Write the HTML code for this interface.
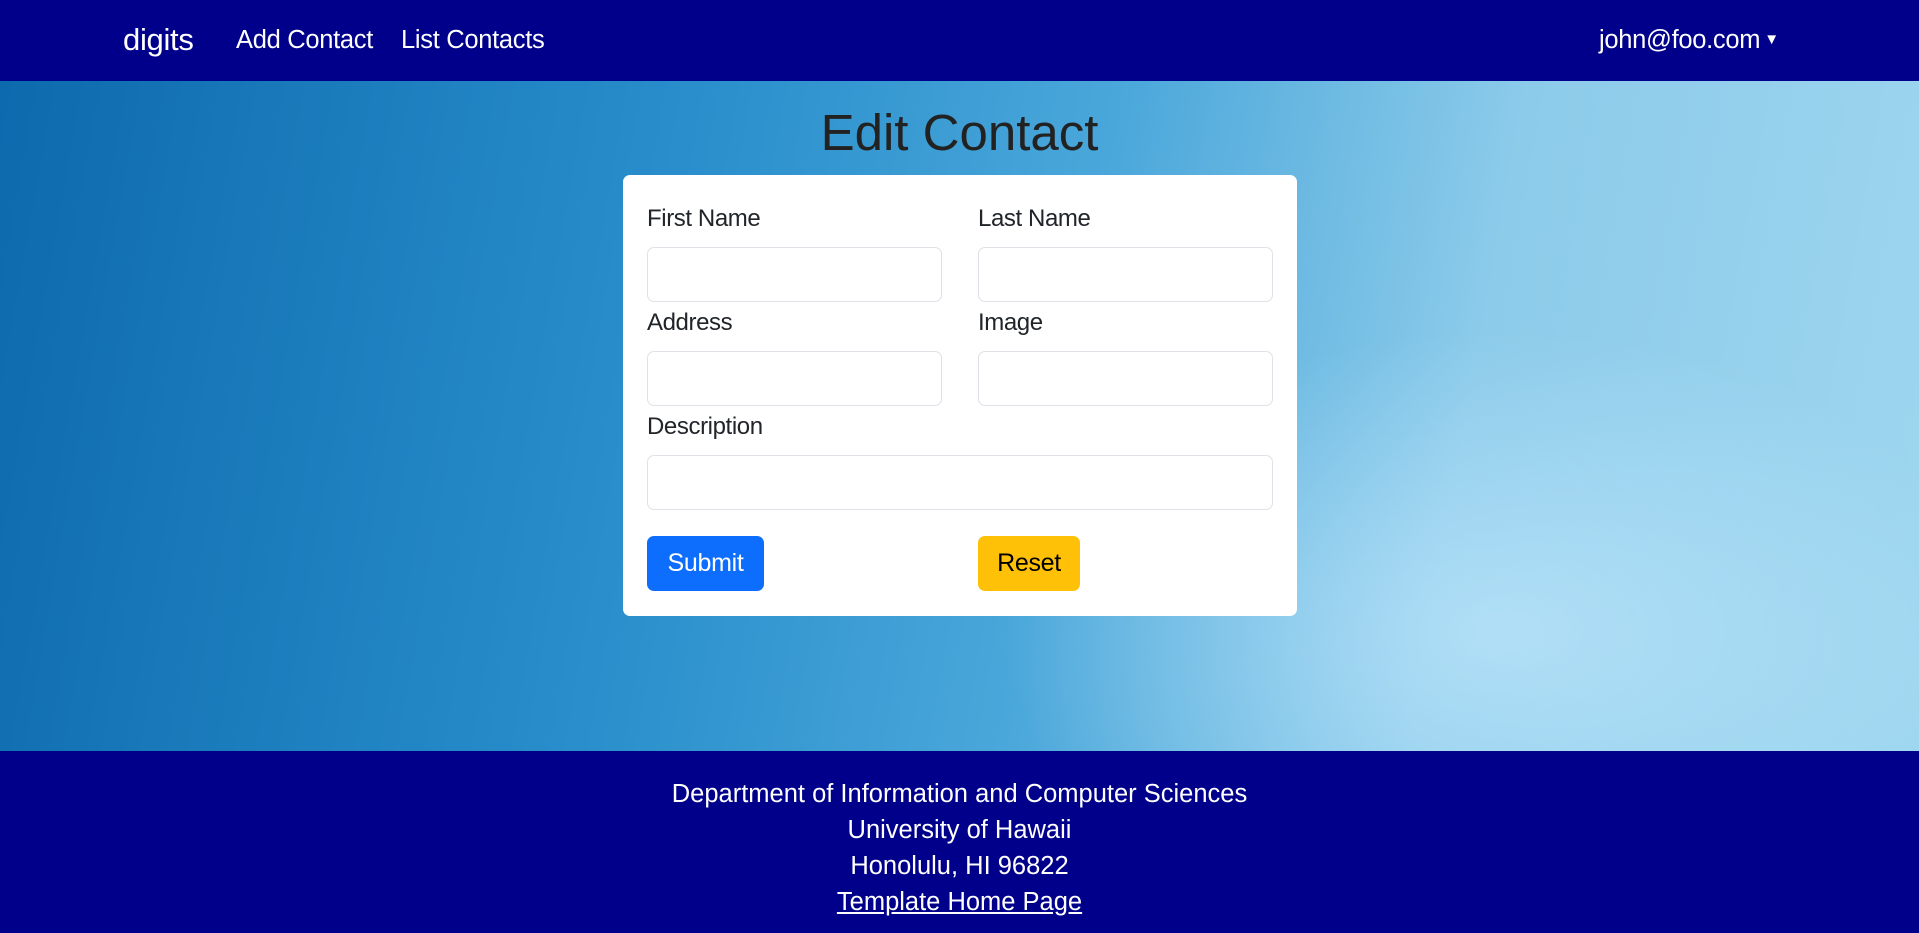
<!DOCTYPE html>
<html><head><meta charset="utf-8"><style>
*{box-sizing:border-box;margin:0;padding:0}
body{width:1919px;height:933px;overflow:hidden;font-family:"Liberation Sans",sans-serif;color:#212529}
nav{position:absolute;left:0;top:0;width:1919px;height:81px;background:#00008b;color:#fff}
nav span{position:absolute;top:1px;line-height:78px;font-size:25.5px;letter-spacing:-0.3px}
main{position:absolute;left:0;top:81px;width:1919px;height:670px;
background:radial-gradient(ellipse 500px 300px at 1500px 550px,rgba(200,235,255,.6),rgba(200,235,255,0)),
linear-gradient(100deg,#0d6aad 0%,#2a8fcc 35%,#4aa7da 55%,#8ccbea 75%,#9ed6ef 100%)}
h1{position:absolute;left:0;width:1919px;top:22px;text-align:center;font-weight:400;font-size:51px;color:#222}
.card{position:absolute;left:623px;top:94px;width:674px;height:441px;background:#fff;border-radius:7px}
.l{position:absolute;font-size:24px;color:#212529;letter-spacing:-0.4px}
.i{position:absolute;height:55px;border:1px solid #dee2e6;border-radius:7px;background:#fff}
.b{position:absolute;height:55px;border-radius:7px;font-size:25px;line-height:55px;text-align:center;letter-spacing:-0.3px}
footer{position:absolute;left:0;top:751px;width:1919px;height:182px;background:#00008b;color:#fff;text-align:center;font-size:25.5px;letter-spacing:0}
footer div{position:absolute;left:0;width:1919px}
</style></head><body>
<nav>
<span style="left:123px;font-size:31px">digits</span>
<span style="left:236px">Add Contact</span>
<span style="left:401px">List Contacts</span>
<span style="left:1599px">john@foo.com<span style="position:static;font-size:15px;vertical-align:4px;margin-left:4px">▼</span></span>
</nav>
<main>
<h1>Edit Contact</h1>
<div class="card">
<div class="l" style="left:24px;top:30px">First Name</div>
<div class="l" style="left:355px;top:30px">Last Name</div>
<div class="i" style="left:24px;top:72px;width:295px"></div>
<div class="i" style="left:355px;top:72px;width:295px"></div>
<div class="l" style="left:24px;top:134px">Address</div>
<div class="l" style="left:355px;top:134px">Image</div>
<div class="i" style="left:24px;top:176px;width:295px"></div>
<div class="i" style="left:355px;top:176px;width:295px"></div>
<div class="l" style="left:24px;top:238px">Description</div>
<div class="i" style="left:24px;top:280px;width:626px"></div>
<div class="b" style="left:24px;top:361px;width:117px;background:#0d6efd;color:#fff">Submit</div>
<div class="b" style="left:355px;top:361px;width:102px;background:#ffc107;color:#000">Reset</div>
</div>
</main>
<footer>
<div style="top:29px">Department of Information and Computer Sciences</div>
<div style="top:65px">University of Hawaii</div>
<div style="top:101px">Honolulu, HI 96822</div>
<div style="top:137px;text-decoration:underline">Template Home Page</div>
</footer>
</body></html>
